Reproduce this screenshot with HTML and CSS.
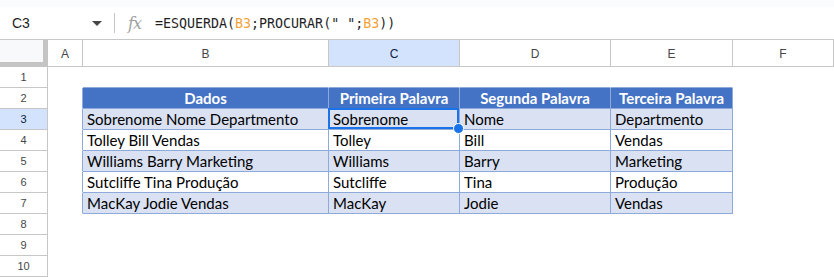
FILE: index.html
```html
<!DOCTYPE html>
<html lang="pt">
<head>
<meta charset="utf-8">
<link rel="stylesheet" href="styles.css">
</head>
<body>
<div class="topband"></div>
<div class="fbar">
  <div class="namebox"><span class="name">C3</span><span class="caret"></span></div>
  <div class="sep"></div>
  <div class="fx">fx</div>
  <div class="formula">=ESQUERDA(<span class="ref">B3</span>;PROCURAR(" ";<span class="ref">B3</span>))</div>
</div>
<div class="grid">
  <div class="corner"></div>
  <div class="ch">A</div>
  <div class="ch">B</div>
  <div class="ch sel">C</div>
  <div class="ch">D</div>
  <div class="ch">E</div>
  <div class="ch">F</div>

  <div class="rh">1</div>
  <div class="c"></div><div class="c tt"></div><div class="c tt"></div><div class="c tt"></div><div class="c tt"></div><div class="c"></div>

  <div class="rh">2</div>
  <div class="c tl"></div>
  <div class="c t th">Dados</div>
  <div class="c t th">Primeira Palavra</div>
  <div class="c t th">Segunda Palavra</div>
  <div class="c t th">Terceira Palavra</div>
  <div class="c"></div>

  <div class="rh sel">3</div>
  <div class="c tl"></div>
  <div class="c t band">Sobrenome Nome Departmento</div>
  <div class="c t band active">Sobrenome<span class="selbox"></span><span class="handle"></span></div>
  <div class="c t band">Nome</div>
  <div class="c t band">Departmento</div>
  <div class="c"></div>

  <div class="rh">4</div>
  <div class="c tl"></div>
  <div class="c t">Tolley Bill Vendas</div>
  <div class="c t">Tolley</div>
  <div class="c t">Bill</div>
  <div class="c t">Vendas</div>
  <div class="c"></div>

  <div class="rh">5</div>
  <div class="c tl"></div>
  <div class="c t band">Williams Barry Marketing</div>
  <div class="c t band">Williams</div>
  <div class="c t band">Barry</div>
  <div class="c t band">Marketing</div>
  <div class="c"></div>

  <div class="rh">6</div>
  <div class="c tl"></div>
  <div class="c t">Sutcliffe Tina Produção</div>
  <div class="c t">Sutcliffe</div>
  <div class="c t">Tina</div>
  <div class="c t">Produção</div>
  <div class="c"></div>

  <div class="rh">7</div>
  <div class="c tl"></div>
  <div class="c t band">MacKay Jodie Vendas</div>
  <div class="c t band">MacKay</div>
  <div class="c t band">Jodie</div>
  <div class="c t band">Vendas</div>
  <div class="c"></div>

  <div class="rh">8</div>
  <div class="c"></div><div class="c"></div><div class="c"></div><div class="c"></div><div class="c"></div><div class="c"></div>
  <div class="rh">9</div>
  <div class="c"></div><div class="c"></div><div class="c"></div><div class="c"></div><div class="c"></div><div class="c"></div>
  <div class="rh">10</div>
  <div class="c"></div><div class="c"></div><div class="c"></div><div class="c"></div><div class="c"></div><div class="c"></div>
</div>
</body>
</html>
```

FILE: styles.css
```css
* { box-sizing: border-box; }
html, body { margin: 0; padding: 0; background: #fff; overflow: hidden; }
body { width: 834px; height: 277px; font-family: Arial, "Liberation Sans", sans-serif; }

.topband { height: 7px; background: #f9fbfd; }

.fbar {
  height: 33px;
  display: flex;
  align-items: center;
  border-bottom: 1px solid #c7c7c7;
  color: #1f1f1f;
}
.namebox {
  width: 114px;
  display: flex;
  align-items: center;
  padding-left: 12px;
  padding-right: 12px;
}
.name { font-size: 14px; flex: 1; }
.caret {
  width: 0; height: 0;
  border-left: 5px solid transparent;
  border-right: 5px solid transparent;
  border-top: 5px solid #444746;
}
.sep { width: 1px; height: 20px; background: #c7c7c7; }
.fx {
  margin-left: 13px;
  width: 27px;
  font-family: "DejaVu Serif", "Liberation Serif", serif;
  font-style: italic;
  font-size: 16px;
  color: #a0a0a0;
  letter-spacing: -1px;
}
.formula {
  font-family: "DejaVu Sans Mono", "Liberation Mono", monospace;
  font-size: 13.3px;
  white-space: pre;
  color: #1f1f1f;
}
.ref { color: #f4a23a; }

.grid {
  display: grid;
  grid-template-columns: 48px 35px 246px 131px 151px 122px 101px;
  grid-template-rows: 27px repeat(10, 21px);
}
.corner {
  background: #f8f9fa;
  border-right: 5px solid #c4c4c4;
  border-bottom: 5px solid #c4c4c4;
}
.ch {
  border-right: 1px solid #c7c7c7;
  border-bottom: 1px solid #c7c7c7;
  display: flex;
  align-items: center;
  justify-content: center;
  font-size: 12px;
  color: #444746;
  padding-top: 1px;
}
.rh {
  border-right: 1px solid #c7c7c7;
  border-bottom: 1px solid #c7c7c7;
  display: flex;
  align-items: center;
  justify-content: center;
  font-size: 11px;
  color: #444746;
}
.sel { background: #d3e3fd; color: #0b1f3f; }

.c {
  border-right: 1px solid transparent;
  border-bottom: 1px solid transparent;
  font-family: Lato, "Open Sans", sans-serif;
  font-size: 15px;
  line-height: 20px;
  color: #000;
  padding-left: 4px;
  white-space: nowrap;
  position: relative;
}
.tt { border-bottom-color: #8eaadb; }
.tl { border-right-color: #8eaadb; }
.t { border-right-color: #8eaadb; border-bottom-color: #8eaadb; }
.th {
  background: #4472c4;
  color: #fff;
  font-weight: bold;
  text-align: center;
  padding-left: 0;
}
.band { background: #d9e1f2; }
.active { z-index: 2; }

.selbox {
  position: absolute;
  left: -1px; top: -1px; right: 0; bottom: 0;
  border: 2px solid #1a73e8;
}
.handle {
  position: absolute;
  right: -5px; bottom: -5px;
  width: 11px; height: 11px;
  border-radius: 50%;
  background: #1a73e8;
  border: 1px solid #fff;
}
```
